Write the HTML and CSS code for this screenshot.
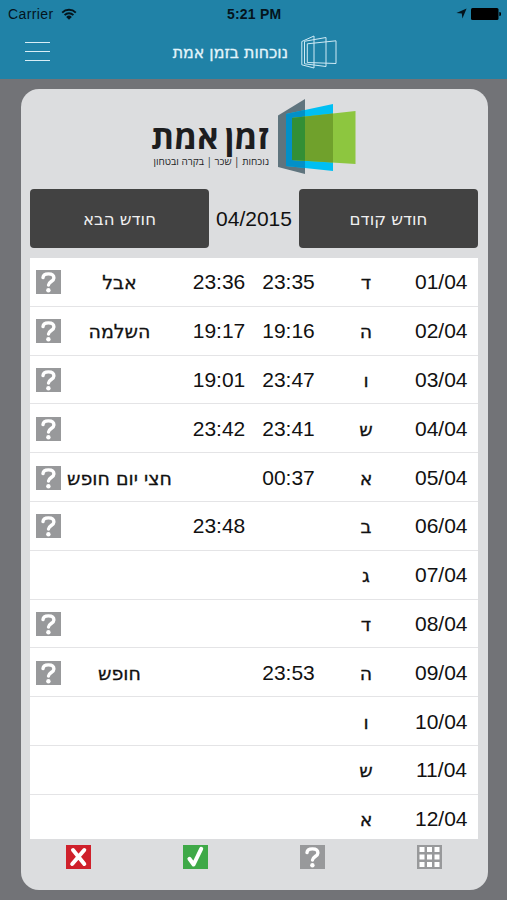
FILE: index.html
```html
<!DOCTYPE html>
<html lang="he">
<head>
    <meta charset="UTF-8">
    <meta name="viewport" content="width=device-width,initial-scale=1" />
    <title>נוכחות בזמן אמת</title>
    <link rel="stylesheet" href="styles.css">
</head>
<body>
    <svg class="defs">
        <symbol id="help" viewBox="0 0 25 24">
            <rect width="25" height="24" fill="#98999b"/>
            <path d="M7 7.6C7.2 4.8 9.3 3.9 12.4 3.9c3.4 0 5.5 1.4 5.5 4 0 3.6-5.4 3.6-5.4 7.2" fill="none" stroke="#fff" stroke-width="3.4" stroke-linecap="round"/>
            <circle cx="12.4" cy="20.3" r="2.2" fill="#fff"/>
        </symbol>
    </svg>
    <div class="header">
        <div class="status">
            <span class="carrier">Carrier</span>
            <svg class="wifi" width="16" height="12" viewBox="0 0 16 12">
                <path d="M1.2 4.6a9.8 9.8 0 0 1 13.6 0M3.6 7.1a6.3 6.3 0 0 1 8.8 0" fill="none" stroke="#04141c" stroke-width="2"/>
                <path d="M5.2 8.9a4 4 0 0 1 5.6 0L8 11.8z" fill="#04141c"/>
            </svg>
            <span class="clock">5:21 PM</span>
            <svg class="arrow" width="11" height="11" viewBox="0 0 11 11">
                <path d="M10.6.4L6.4 10.6 5.8 5.5.4 5z" fill="#04141c"/>
            </svg>
            <svg class="battery" width="30" height="12" viewBox="0 0 30 12">
                <rect width="27.5" height="12" rx="1.5" fill="#000"/>
                <path d="M28.3 4a2 2 0 0 1 0 4z" fill="#000"/>
            </svg>
        </div>
        <div class="nav">
            <div class="menu"><i></i><i></i><i></i></div>
            <div class="title" dir="rtl">נוכחות בזמן אמת</div>
            <svg class="doors" width="36" height="34" viewBox="0 0 36 34">
                <g fill="none" stroke="#cfeaf5" stroke-width="1">
                    <path d="M.8 6.5L13 1v32L.8 29.8z"/>
                    <path d="M3.5 6.3L25 2.5v29L3.5 28.8z"/>
                    <path d="M6.3 8.8L35 5.8v22.7L6.3 27.5z"/>
                </g>
            </svg>
        </div>
    </div>
    <div class="panel">
        <div class="logo">
            <div class="brand" dir="rtl">
                <div class="name">זמן אמת</div>
                <div class="slogan">נוכחות | שכר | בקרה ובטחון</div>
            </div>
            <svg class="mark" width="78" height="77" viewBox="0 0 78 77">
                <path d="M0 16.5L27 0v75L0 68z" fill="#5f747e"/>
                <path d="M8 15L55 5v67L8 67z" fill="#00bff3"/>
                <path d="M8 15L27 11v58L8 67z" fill="#0390c8"/>
                <path d="M14 19L77.5 12v53L14 61z" fill="#8dc63f"/>
                <path d="M14 19L55 14.5v49.1L14 61z" fill="#70a12c"/>
                <path d="M14 19L27 17.6v44.2L14 61z" fill="#338f35"/>
            </svg>
        </div>
        <div class="months">
            <div class="btn">חודש הבא</div>
            <div class="month">04/2015</div>
            <div class="btn">חודש קודם</div>
        </div>
        <div class="list" id="list"></div>
        <div class="footer">
            <svg width="25" height="24" viewBox="0 0 25 24">
                <rect width="25" height="24" fill="#cf202b"/>
                <path d="M7 5L18.3 19M18.3 5L6.2 19" stroke="#fff" stroke-width="4" stroke-linecap="round"/>
            </svg>
            <svg width="25" height="24" viewBox="0 0 25 24">
                <rect width="25" height="24" fill="#3fa948"/>
                <path d="M6.4 13.8L10.6 19.5 18.2 3.8" fill="none" stroke="#fff" stroke-width="4" stroke-linecap="round" stroke-linejoin="round"/>
            </svg>
            <svg width="25" height="24"><use href="#help"/></svg>
            <svg width="25" height="24" viewBox="0 0 25 24">
                <rect width="25" height="24" fill="#98999b"/>
                <path d="M2.5 4.5h20M2.5 12h20M2.5 19.5h20" stroke="#fff" stroke-width="4.8" stroke-dasharray="5 2.5"/>
            </svg>
        </div>
    </div>
<script>
    // date, day, in, out, reason, question mark
    var days=[
        ["01/04","ד","23:35","23:36","אבל",1],
        ["02/04","ה","19:16","19:17","השלמה",1],
        ["03/04","ו","23:47","19:01","",1],
        ["04/04","ש","23:41","23:42","",1],
        ["05/04","א","00:37","","חצי יום חופש",1],
        ["06/04","ב","","23:48","",1],
        ["07/04","ג","","","",0],
        ["08/04","ד","","","",1],
        ["09/04","ה","23:53","","חופש",1],
        ["10/04","ו","","","",0],
        ["11/04","ש","","","",0],
        ["12/04","א","","","",0]
    ];
    var html="";
    for(var i=0;i<days.length;i++){
        var d=days[i];
        html+='<div class="row"><span class="ask">'+(d[5]?'<svg width="25" height="24"><use href="#help"/></svg>':'')+'</span>'
            +'<span class="heb">'+d[4]+'</span><span>'+d[3]+'</span><span>'+d[2]+'</span>'
            +'<span class="heb">'+d[1]+'</span><span class="date">'+d[0]+'</span></div>';
    }
    document.getElementById("list").innerHTML=html;
</script>
</body>
</html>
```
FILE: styles.css
```css
*{
    box-sizing: border-box;
}
body{
    margin: 0;
    height: 900px;
    overflow: hidden;
    background-color: #727377;
    font-family: "Liberation Sans", Arial, sans-serif;
    color: #111;
}
svg{
    display: block;
}
.defs{
    position: absolute;
    width: 0;
    height: 0;
}
.header{
    height: 79px;
    background-color: #2082a7;
}
.status{
    display: grid;
    grid-template-columns: 53px 160px 1fr 15px 30px;
    align-items: center;
    height: 27px;
    padding: 0 6px 0 8px;
    font-size: 14px;
    color: #04141c;
}
.carrier{
    letter-spacing: 0.4px;
}
.clock{
    font-weight: bold;
    padding-left: 6px;
    letter-spacing: 0.2px;
}
.nav{
    display: flex;
    align-items: center;
    height: 50px;
    padding-left: 25px;
}
.menu{
    width: 25px;
    height: 19px;
    display: flex;
    flex-direction: column;
    justify-content: space-between;
    margin-right: 122px;
    margin-top: -2px;
}
.menu i{
    height: 1px;
    background-color: #d8eef6;
}
.title{
    width: 116px;
    font-family: "DejaVu Sans", sans-serif;
    font-size: 15.8px;
    white-space: nowrap;
    color: #e4f5fb;
    -webkit-text-stroke: 0.3px #e4f5fb;
}
.doors{
    margin-left: 13px;
}
.panel{
    width: 467px;
    height: 801px;
    margin: 10px 0 0 20.5px;
    padding: 10px 9.5px 0 9.5px;
    border-radius: 18px;
    background-color: #dcdddf;
}
.logo{
    display: flex;
    height: 90px;
    padding-left: 122px;
}
.brand{
    width: 117px;
    margin-right: 9px;
    white-space: nowrap;
    color: #1d1d1f;
}
.name{
    font-family: "Open Sans", "Liberation Sans", sans-serif;
    font-size: 33px;
    font-weight: 700;
    line-height: 36px;
    padding-top: 20px;
    letter-spacing: 0.2px;
    word-spacing: -3px;
}
.slogan{
    font-family: "Open Sans", "Liberation Sans", sans-serif;
    font-size: 10px;
    font-weight: 500;
    line-height: 12px;
}
.months{
    display: flex;
    justify-content: space-between;
    align-items: center;
    height: 59px;
}
.btn{
    width: 179px;
    height: 59px;
    border-radius: 4px;
    background-color: #424242;
    color: #f0f0f0;
    font-family: "DejaVu Sans", sans-serif;
    font-size: 16.6px;
    line-height: 61px;
    text-align: center;
}
.month{
    font-size: 21px;
}
.list{
    height: 581px;
    margin-top: 10px;
    overflow: hidden;
    background-color: #fff;
}
.row{
    display: grid;
    grid-template-columns: 31px 117px 82px 57px 98px 1fr;
    align-items: center;
    height: 48.8px;
    padding-top: 1px;
    border-bottom: 1px solid #e4e4e6;
    text-align: center;
    font-size: 21px;
    white-space: nowrap;
}
.ask{
    padding-left: 6px;
}
.heb{
    font-family: "DejaVu Sans", sans-serif;
    font-size: 19px;
    -webkit-text-stroke: 0.3px #111;
}
.date{
    text-align: right;
    padding-right: 11px;
}
.footer{
    display: flex;
    justify-content: space-between;
    padding: 6px 36px 0;
}
```
